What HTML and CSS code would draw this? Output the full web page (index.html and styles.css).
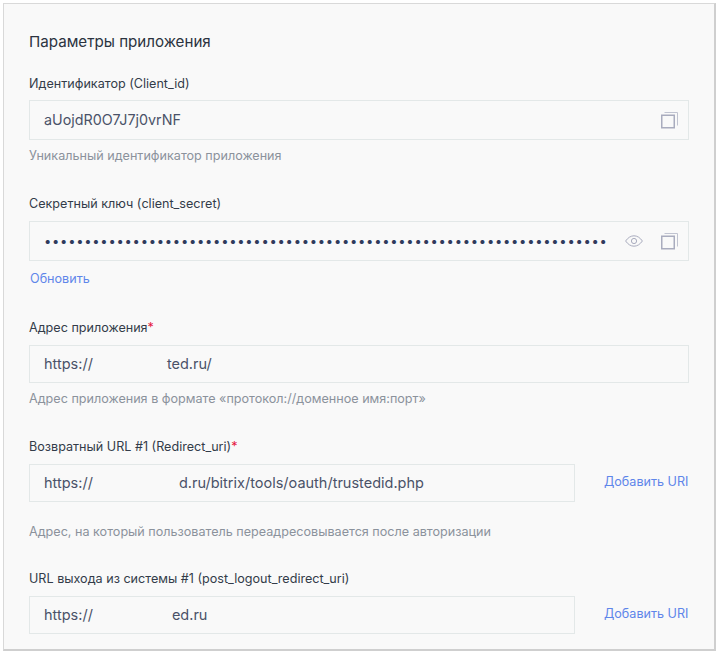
FILE: index.html
```html
<!DOCTYPE html>
<html lang="ru">
<head>
<meta charset="utf-8">
<title>Параметры приложения</title>
<link rel="stylesheet" href="styles.css">
</head>
<body>
<main class="panel">
  <h2 class="title">Параметры приложения</h2>

  <section class="field field-id">
    <div class="label">Идентификатор (Client_id)</div>
    <div class="box box-tall">
      <span class="value value-id">aUojdR0O7J7j0vrNF</span>
      <svg class="icon icon-copy" viewBox="0 0 17 17" width="17" height="17"><path class="back" d="M3.5 .5H16.5V13.5"/><rect class="front" x="0.75" y="3.25" width="12.5" height="12.5"/></svg>
    </div>
    <div class="hint">Уникальный идентификатор приложения</div>
  </section>

  <section class="field field-secret">
    <div class="label">Секретный ключ (client_secret)</div>
    <div class="box box-tall box-gap">
      <span class="value dots">••••••••••••••••••••••••••••••••••••••••••••••••••••••••••••••••••••••</span>
      <svg class="icon icon-eye" viewBox="0 0 18 12" width="18" height="12"><path d="M0.6 6C3 2.6 5.8 0.8 9 0.8S15 2.6 17.4 6C15 9.4 12.2 11.2 9 11.2S3 9.4 0.6 6Z"/><circle cx="9" cy="6" r="2.6"/></svg>
      <svg class="icon icon-copy" viewBox="0 0 17 17" width="17" height="17"><path class="back" d="M3.5 .5H16.5V13.5"/><rect class="front" x="0.75" y="3.25" width="12.5" height="12.5"/></svg>
    </div>
    <a class="link refresh">Обновить</a>
  </section>

  <section class="field field-address">
    <div class="label">Адрес приложения<span class="req">*</span></div>
    <div class="box box-gap">
      <span class="value">https://</span><span class="value gap-a">ted.ru/</span>
    </div>
    <div class="hint">Адрес приложения в формате «протокол://доменное имя:порт»</div>
  </section>

  <section class="field field-redirect">
    <div class="label">Возвратный URL #1 (Redirect_uri)<span class="req">*</span></div>
    <div class="row">
      <div class="box box-short box-gap">
        <span class="value">https://</span><span class="value gap-b">d.ru/bitrix/tools/oauth/trustedid.php</span>
      </div>
      <a class="link add">Добавить URI</a>
    </div>
    <div class="hint hint-wide">Адрес, на который пользователь переадресовывается после авторизации</div>
  </section>

  <section class="field field-logout">
    <div class="label">URL выхода из системы #1 (post_logout_redirect_uri)</div>
    <div class="row">
      <div class="box box-short box-gap">
        <span class="value">https://</span><span class="value gap-c">ed.ru</span>
      </div>
      <a class="link add">Добавить URI</a>
    </div>
  </section>
</main>
</body>
</html>
```

FILE: styles.css
```css
* { box-sizing: border-box; }

html, body { margin: 0; height: 100%; background: #ffffff; }

body {
  padding: 3px 3px 2px 3px;
  width: 719px;
  height: 653px;
  overflow: hidden;
  font-family: Inter, "Noto Sans", sans-serif;
  color: #333c49;
}

.panel {
  width: 713px;
  height: 648px;
  padding: 0 25px 0 25px;
  background: #f9f9f9;
  border: 1px solid #d9d9d9;
  border-right: 2px solid #cfcfcf;
  border-bottom: 2px solid #cfcfcf;
  overflow: hidden;
}

.title {
  margin: 0;
  padding-top: 28px;
  font-size: 15.15px;
  line-height: 20px;
  font-weight: 400;
  color: #2b3340;
}

.field-id { margin-top: 22px; }
.field-secret { margin-top: 29px; }
.field-address { margin-top: 30px; }
.field-redirect { margin-top: 29px; }
.field-logout { margin-top: 28px; }

.label {
  font-size: 12.6px;
  line-height: 20px;
  color: #333c49;
}

.req { color: #e5173f; }

.box {
  display: flex;
  align-items: center;
  height: 38px;
  margin-top: 6px;
  padding: 0 10px 0 14px;
  border: 1px solid #e3e8e8;
  background: #f9f9f9;
}

.box-tall { height: 40px; }
.box-gap { margin-top: 7px; }

.box-short { width: 546px; flex: none; }

.value {
  font-size: 14.5px;
  line-height: 20px;
  color: #4a5268;
  white-space: nowrap;
}

.value-id { font-size: 14.3px; }

.gap-a { margin-left: 74px; }
.gap-b { margin-left: 86px; }
.gap-c { margin-left: 79px; }

.dots {
  font-size: 13px;
  letter-spacing: 0.74px;
  color: #2f3a5c;
}

.icon { flex: none; fill: none; stroke: #a9acbe; display: block; }
.box > .icon:first-of-type { margin-left: auto; }
.icon-eye { stroke-width: 1; margin-right: 18px; }
.icon-copy .front { stroke-width: 1.5; }
.icon-copy .back { stroke: #c0c3d0; stroke-width: 1; }

.hint {
  margin-top: 7px;
  font-size: 12.6px;
  line-height: 18px;
  color: #8b929c;
}

.hint-wide { margin-top: 21px; }

.link {
  font-size: 12.6px;
  line-height: 18px;
  color: #5f86ea;
}

.refresh {
  display: block;
  margin-top: 9px;
  margin-left: 1px;
}

.row {
  display: flex;
  align-items: flex-start;
}

.add {
  margin-left: 29px;
  margin-top: 16px;
  white-space: nowrap;
}
```
